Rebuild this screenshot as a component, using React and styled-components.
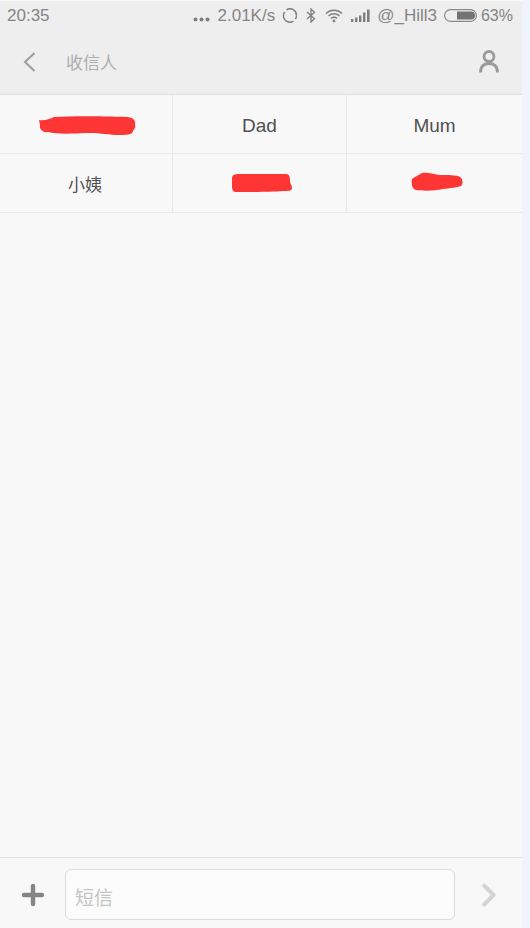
import React from 'react';
import styled, { createGlobalStyle } from 'styled-components';

const GlobalStyle = createGlobalStyle`
  html, body {
    margin: 0;
    padding: 0;
    height: 100%;
    background: #eff3fb;
  }
  #root {
    height: 100%;
  }
`;

const Phone = styled.div`
  display: flex;
  flex-direction: column;
  box-sizing: border-box;
  width: 522px;
  height: 928px;
  padding-top: 1px;
  background: #f8f8f8;
  font-family: 'Liberation Sans', 'Noto Sans CJK SC', sans-serif;
`;

const Header = styled.header`
  flex: none;
  height: 93px;
  background: #eeeeee;
  border-bottom: 1px solid #e0e0e0;
`;

const StatusBar = styled.div`
  display: flex;
  align-items: center;
  height: 29px;
  padding: 0 9px 0 7px;
  color: #858585;
  font-size: 17px;
`;

const StatusGap = styled.div`
  flex-grow: 1;
`;

const StatusText = styled.span`
  margin-left: ${(p) => p.$left || 0}px;
  font-size: ${(p) => p.$size || 17}px;
  white-space: nowrap;
`;

const StatusIcon = styled.svg`
  display: block;
  flex: none;
  margin-left: ${(p) => p.$left || 0}px;
  margin-top: ${(p) => p.$top || 0}px;
`;

const TitleBar = styled.div`
  display: flex;
  align-items: center;
  height: 64px;
  padding: 0 23px 0 22px;
`;

const Title = styled.span`
  margin-left: 29px;
  padding-bottom: 2px;
  color: #adadad;
  font-size: 17px;
`;

const Grid = styled.div`
  flex: none;
  display: grid;
  grid-template-columns: 173px 174px 175px;
  grid-auto-rows: 59px;
`;

const Cell = styled.div`
  display: flex;
  align-items: center;
  justify-content: center;
  box-sizing: border-box;
  padding-top: ${(p) => p.$pushDown || 0}px;
  padding-right: ${(p) => p.$pushLeft || 0}px;
  border-bottom: 1px solid #e8e8e8;
  border-right: ${(p) => (p.$last ? 'none' : '1px solid #e8e8e8')};
  color: #505050;
  font-size: ${(p) => p.$size || 19}px;
`;

const Spacer = styled.div`
  flex-grow: 1;
`;

const Composer = styled.footer`
  flex: none;
  display: flex;
  align-items: center;
  box-sizing: border-box;
  height: 71px;
  padding: 0 24px 0 21px;
  border-top: 1px solid #e2e2e2;
`;

const MessageBox = styled.div`
  display: flex;
  align-items: center;
  box-sizing: border-box;
  width: 390px;
  height: 51px;
  margin: 2px 0 0 20px;
  padding: 5px 0 0 9px;
  background: #fcfcfc;
  border: 1px solid #dcdcdc;
  border-radius: 6px;
  color: #c4c4c4;
  font-size: 19px;
`;

const ScribbleMark = styled.svg`
  display: block;
  flex: none;
  margin-top: ${(p) => p.$top || 0}px;
  margin-left: ${(p) => p.$left || 0}px;
`;

const BackIcon = () => (
  <svg width="15" height="22" viewBox="0 0 15 22" fill="none">
    <path d="M12.5 2 L3 11 L12.5 20" stroke="#9c9c9c" strokeWidth="2" />
  </svg>
);

const PersonIcon = () => (
  <svg width="20" height="24" viewBox="0 0 20 24" fill="none" style={{ marginLeft: 'auto' }}>
    <circle cx="10" cy="6.5" r="5" stroke="#9a9a9a" strokeWidth="2.8" />
    <path d="M1.5 22.5 C1.5 16 5 13.5 10 13.5 C15 13.5 18.5 16 18.5 22.5" stroke="#9a9a9a" strokeWidth="2.8" />
  </svg>
);

const Dots = () => (
  <StatusIcon $top={7} width="17" height="5" viewBox="0 0 17 5" fill="#7e7e7e">
    <circle cx="2.5" cy="2.5" r="2" />
    <circle cx="8.5" cy="2.5" r="2" />
    <circle cx="14.5" cy="2.5" r="2" />
  </StatusIcon>
);

const SyncIcon = () => (
  <StatusIcon $left={7} width="16" height="15" viewBox="0 0 16 15" fill="none" stroke="#7e7e7e" strokeWidth="1.4">
    <path d="M4.5 1.8 A6.5 6.5 0 0 1 14.5 7.5" />
    <path d="M11.5 13.2 A6.5 6.5 0 0 1 1.5 7.5 A6.5 6.5 0 0 1 2.6 4" />
    <path d="M14.5 7.5 A6.5 6.5 0 0 1 13.4 11" />
  </StatusIcon>
);

const BluetoothIcon = () => (
  <StatusIcon $left={8} width="10" height="15" viewBox="0 0 10 15" fill="none" stroke="#7e7e7e" strokeWidth="1.3">
    <path d="M1 4 L8.5 10.8 L5 14 L5 1 L8.5 4.2 L1 11" />
  </StatusIcon>
);

const WifiIcon = () => (
  <StatusIcon $left={9} width="18" height="14" viewBox="0 0 18 14" fill="none" stroke="#7e7e7e" strokeWidth="1.4">
    <path d="M1 4.5 A11.5 11.5 0 0 1 17 4.5" />
    <path d="M3.5 7 A8 8 0 0 1 14.5 7" />
    <path d="M6 9.5 A4.2 4.2 0 0 1 12 9.5" />
    <circle cx="9" cy="12" r="1.4" fill="#7e7e7e" stroke="none" />
  </StatusIcon>
);

const SignalIcon = () => (
  <StatusIcon $left={8} width="19" height="13" viewBox="0 0 19 13" fill="#7e7e7e">
    <rect x="0" y="10" width="2.4" height="3" />
    <rect x="4" y="8.5" width="2.4" height="4.5" />
    <rect x="8" y="6.5" width="2.4" height="6.5" />
    <rect x="12" y="3.5" width="2.4" height="9.5" />
    <rect x="16" y="0.5" width="2.6" height="12.5" />
  </StatusIcon>
);

const BatteryIcon = () => (
  <StatusIcon $left={7} width="33" height="13" viewBox="0 0 33 13" fill="none">
    <rect x="0.6" y="0.6" width="31.8" height="11.8" rx="5.9" stroke="#8a8a8a" strokeWidth="1.2" />
    <path d="M13 2.5 H27 A4 4 0 0 1 27 10.5 H13 Z" fill="#737373" />
  </StatusIcon>
);

const PlusIcon = () => (
  <svg width="24" height="24" viewBox="0 0 24 24" style={{ flex: 'none', marginTop: '3px' }}>
    <path d="M12 3 V21 M3 12 H21" stroke="#858585" strokeWidth="4.4" strokeLinecap="round" />
  </svg>
);

const SendIcon = () => (
  <svg width="16" height="24" viewBox="0 0 16 24" fill="none" style={{ flex: 'none', marginLeft: '27px', marginTop: '3px' }}>
    <path d="M2.2 2.5 L11.5 12 L2.2 21.5" stroke="#d4d4d4" strokeWidth="4" strokeLinecap="round" strokeLinejoin="round" />
  </svg>
);

// hand-drawn red blots that hide the names in the picture
const BlotWide = () => (
  <ScribbleMark $top={3} $left={2} width="98" height="20" viewBox="0 0 98 20" fill="#fd3535">
    <path d="M1 4 C6 5 12 3 16 1 C35 0 55 0 90 1 C96 2 98 5 97 9 C98 12 96 13 95 15 C95 19 88 19 78 19 C68 18 60 17 48 17 C30 18 18 18 10 16 C4 17 1 12 2 9 Z" />
  </ScribbleMark>
);

const BlotMiddle = () => (
  <ScribbleMark $left={5} width="62" height="19" viewBox="0 0 62 19" fill="#fd3535">
    <path d="M1 5 C1 1 3 0 8 0 C22 0 40 0 55 0 C58 0 59 2 59 7 C59 10 61 11 61 14 C61 17 58 17 52 17 C40 18 20 18 6 18 C2 18 1 16 1 12 Z" />
  </ScribbleMark>
);

const BlotNarrow = () => (
  <ScribbleMark $top={-3} $left={5} width="52" height="20" viewBox="0 0 52 20" fill="#fd3535">
    <path d="M1 7 C5 4 8 3 11 1 C16 0 22 2 28 3 C36 3 46 3 49 5 C52 7 52 11 51 13 C48 16 38 16 32 17 C24 19 12 19 5 18 C1 17 0 11 1 7 Z" />
  </ScribbleMark>
);

const App = () => (
  <Phone>
    <GlobalStyle />
    <Header>
      <StatusBar>
        <StatusText>20:35</StatusText>
        <StatusGap />
        <Dots />
        <StatusText $left={8}>2.01K/s</StatusText>
        <SyncIcon />
        <BluetoothIcon />
        <WifiIcon />
        <SignalIcon />
        <StatusText $left={7}>@_Hill3</StatusText>
        <BatteryIcon />
        <StatusText $left={4} $size={16}>63%</StatusText>
      </StatusBar>
      <TitleBar>
        <BackIcon />
        <Title>收信人</Title>
        <PersonIcon />
      </TitleBar>
    </Header>
    <Grid>
      <Cell><BlotWide /></Cell>
      <Cell $pushDown={3}>Dad</Cell>
      <Cell $pushDown={3} $last>Mum</Cell>
      <Cell $size={17} $pushLeft={2}>小姨</Cell>
      <Cell><BlotMiddle /></Cell>
      <Cell $last><BlotNarrow /></Cell>
    </Grid>
    <Spacer />
    <Composer>
      <PlusIcon />
      <MessageBox>短信</MessageBox>
      <SendIcon />
    </Composer>
  </Phone>
);

export default App;
